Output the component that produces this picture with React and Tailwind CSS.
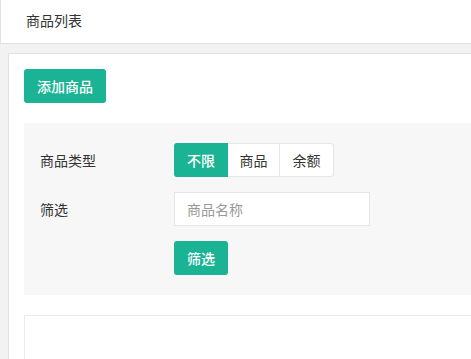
import React from 'react';

const font = { fontFamily: '"Noto Sans CJK SC", "Noto Sans", sans-serif' };

export default function App() {
  return (
    <div
      className="h-[359px] w-[471px] overflow-hidden bg-[#f2f2f2] text-[14px] text-[#333]"
      style={font}
    >
      {/* Page title */}
      <div className="h-[44px] bg-white border-b border-l border-[#e2e2e2] pl-[25px] pt-[10px] leading-[20px]">
        商品列表
      </div>

      <div className="pt-[9px] pl-[8px]">
        <div className="w-[560px] h-[320px] bg-white border border-[#e2e2e2] p-[15px]">
          <button className="h-[34px] w-[82px] rounded-[3px] bg-[#1ab394] text-white text-[14px] font-medium leading-[34px]">
            添加商品
          </button>

          {/* Filters */}
          <div className="mt-[20px] bg-[#f7f7f7] pl-[16px] py-[20px] flex flex-col gap-[15px]">
            <div className="flex items-center">
              <span className="w-[134px]">商品类型</span>
              <div className="flex">
                <span className="w-[54px] h-[34px] flex items-center justify-center bg-[#1ab394] text-white rounded-l-[3px] font-medium">
                  不限
                </span>
                <span className="w-[52px] h-[34px] flex items-center justify-center bg-white border-y border-r border-[#e6e6e6]">
                  商品
                </span>
                <span className="w-[54px] h-[34px] flex items-center justify-center bg-white border-y border-r border-[#e6e6e6] rounded-r-[3px]">
                  余额
                </span>
              </div>
            </div>
            <div className="flex items-center">
              <span className="w-[134px]">筛选</span>
              <input
                className="w-[196px] h-[34px] border border-[#e6e6e6] bg-white pl-[12px] text-[14px] outline-none placeholder:text-[#999]"
                placeholder="商品名称"
              />
            </div>
            <div className="flex items-center">
              <span className="w-[134px]" />
              <button className="w-[54px] h-[34px] rounded-[3px] bg-[#1ab394] text-white font-medium">
                筛选
              </button>
            </div>
          </div>

          {/* Table area */}
          <div className="mt-[20px] h-[100px] border border-[#ebebeb]" />
        </div>
      </div>
    </div>
  );
}
